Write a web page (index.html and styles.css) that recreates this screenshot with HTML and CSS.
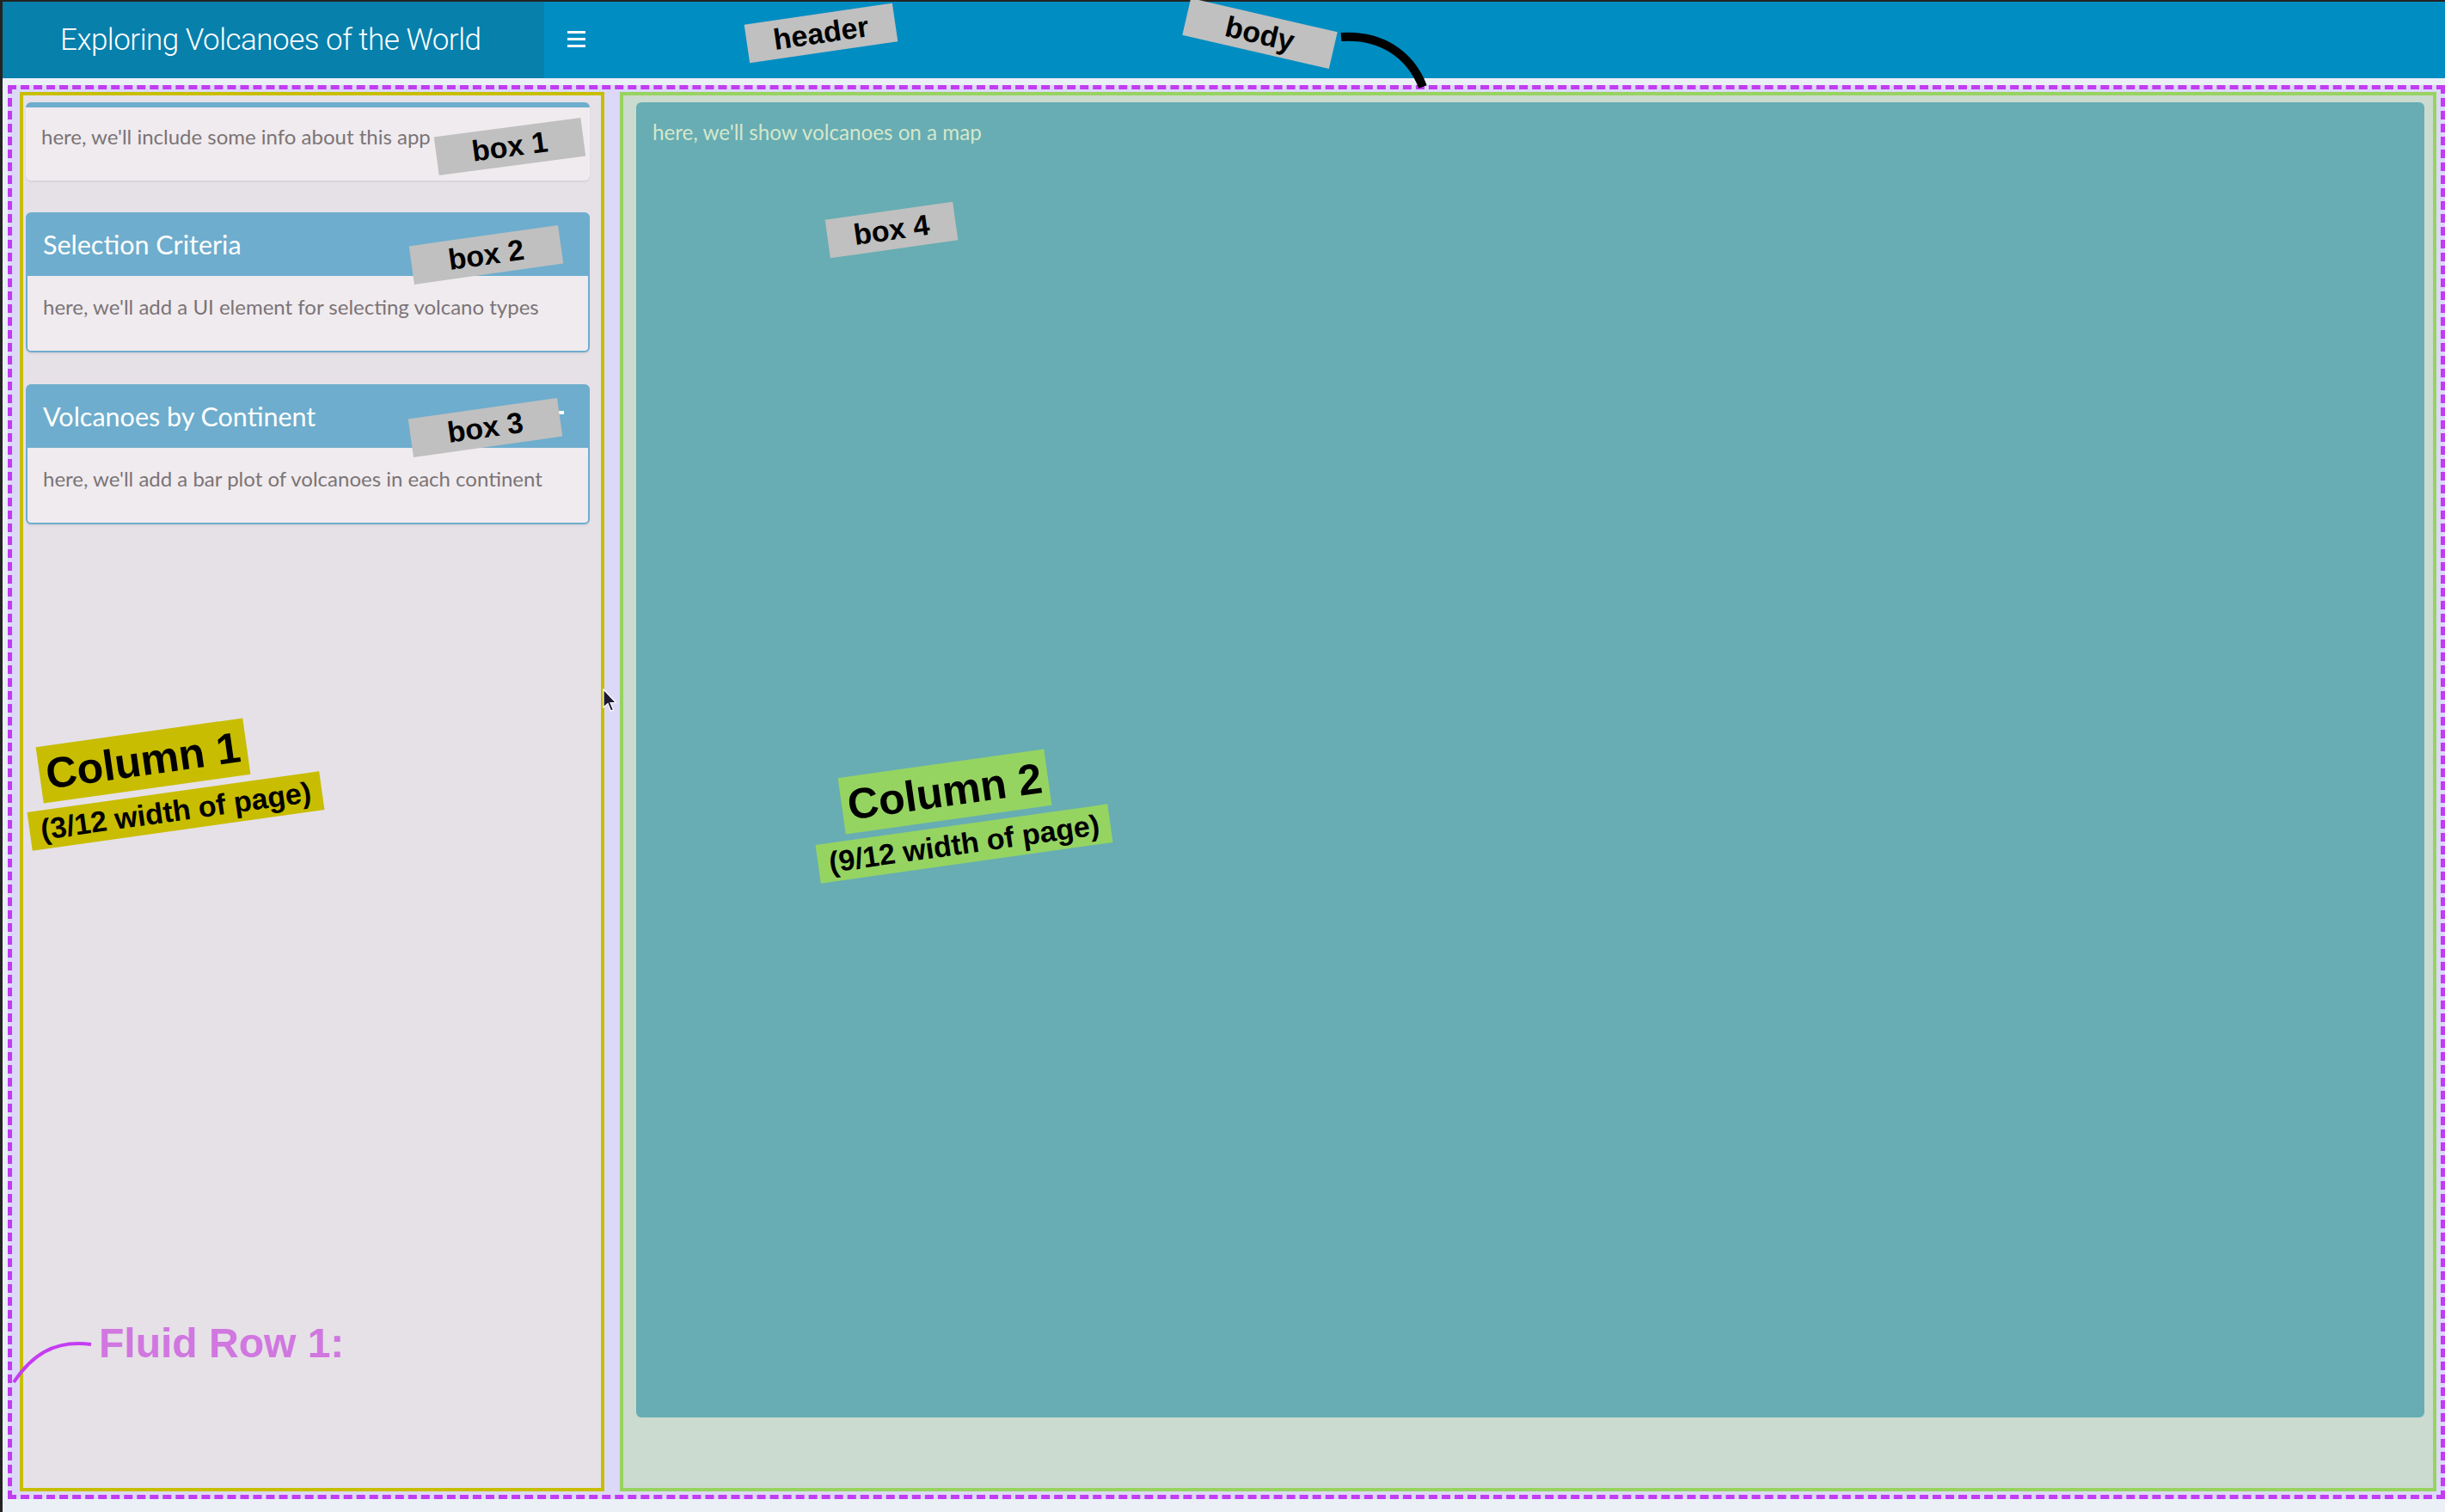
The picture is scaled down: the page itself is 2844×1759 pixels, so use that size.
FILE: index.html
```html
<!DOCTYPE html>
<html lang="en">
<head>
<meta charset="utf-8">
<title>Exploring Volcanoes of the World</title>
<link rel="stylesheet" href="styles.css">
</head>
<body>
<div class="frame">
  <header class="topbar">
    <div class="logo"><span class="logo-text">Exploring Volcanoes of the World</span></div>
    <nav class="navbar">
      <span class="toggle"><i></i><i></i><i></i></span>
    </nav>
  </header>
  <main class="content">
    <div class="fluid-row">
      <section class="col col-3">
        <div class="box box-plain">
          <div class="box-body"><p>here, we'll include some info about this app</p></div>
        </div>
        <div class="box box-solid">
          <div class="box-header"><h3 class="box-title">Selection Criteria</h3></div>
          <div class="box-body"><p>here, we'll add a UI element for selecting volcano types</p></div>
        </div>
        <div class="box box-solid">
          <div class="box-header"><h3 class="box-title">Volcanoes by Continent</h3><span class="box-tool"></span></div>
          <div class="box-body"><p>here, we'll add a bar plot of volcanoes in each continent</p></div>
        </div>
      </section>
      <section class="col col-9">
        <div class="box-map"><p>here, we'll show volcanoes on a map</p></div>
      </section>
    </div>
  </main>
</div>

<div class="annotations">
  <div class="tag tag-header">header</div>
  <div class="tag tag-body">body</div>
  <div class="tag tag-box1">box 1</div>
  <div class="tag tag-box2">box 2</div>
  <div class="tag tag-box3">box 3</div>
  <div class="tag tag-box4">box 4</div>
  <div class="tag tag-col1 tag-big">Column 1</div>
  <div class="tag tag-col1s">(3/12 width of page)</div>
  <div class="tag tag-col2 tag-big">Column 2</div>
  <div class="tag tag-col2s">(9/12 width of page)</div>
  <div class="fluid-label">Fluid Row 1:</div>
  <svg class="arrows" width="2844" height="1759" viewBox="0 0 2844 1759">
    <path d="M1560 43 C1605 40 1640 62 1655 101" fill="none" stroke="#000" stroke-width="10"/>
    <path d="M16 1608 C36 1578 62 1558 106 1564" fill="none" stroke="#c43cf2" stroke-width="4"/>
  </svg>
  <svg class="cursor" width="18" height="28" viewBox="0 0 18 28">
    <path d="M1 1 L1 22 L6 17.5 L9.5 26 L12.5 24.8 L9 16.5 L15.5 16.5 Z" fill="#1c1a33" stroke="#fff" stroke-width="1.2"/>
  </svg>
</div>
</body>
</html>
```
FILE: styles.css
```css
* { box-sizing: border-box; }
html, body { margin: 0; padding: 0; }
body {
  background: #ebf0f7;
  font-family: Lato, "Open Sans", sans-serif;
  position: relative;
  overflow: hidden;
}
.frame {
  height: 100vh;
  display: flex;
  flex-direction: column;
  border-top: 2px solid #232323;
  border-left: 3px solid #232323;
}
.topbar {
  height: 89px;
  flex: none;
  display: flex;
}
.logo {
  width: 630px;
  background: #0780ac;
  padding-left: 67px;
  line-height: 89px;
}
.logo-text {
  font-family: Roboto, "Liberation Sans", sans-serif;
  font-weight: 300;
  font-size: 35px;
  letter-spacing: -0.5px;
  color: #fff;
  white-space: nowrap;
}
.navbar {
  flex: 1;
  background: #008dc2;
  padding: 34px 0 0 27px;
}
.toggle { display: flex; flex-direction: column; gap: 5px; width: 21px; }
.toggle i { display: block; height: 3px; background: #fff; }

.content {
  flex: 1;
  display: flex;
  padding: 8px 0 15px 6px;
}
.fluid-row {
  flex: 1;
  display: flex;
  gap: 18px;
  border: 5px dashed #c23cf2;
  background: #dcd8f8;
  padding: 3px 5px 4px 9px;
}
.col-3 {
  width: 680px;
  flex: none;
  border: 4px solid #c8be00;
  background: #e6e1e7;
  padding: 8px 13px 0 3px;
}
.col-9 {
  flex: 1;
  border: 4px solid #97d35f;
  background: #cbdbcf;
  padding: 8px 10px 0 15px;
}
.box {
  background: #f0ebee;
  border-radius: 6px;
  margin-bottom: 37px;
  color: #7a7477;
  font-size: 24px;
  box-shadow: 0 2px 2px rgba(0,0,0,0.06);
}
.box p { margin: 0; line-height: 37px; white-space: nowrap; }
.box-plain { border-top: 6px solid #6eadcd; }
.box-plain .box-body { height: 85px; padding: 15px 18px 0; }
.box-solid { border: 2px solid #6eadcd; }
.box-header {
  background: #6eadcd;
  height: 72px;
  padding: 17px 28px 0 18px;
  display: flex;
  justify-content: space-between;
  align-items: flex-start;
}
.box-title {
  margin: 0;
  font-size: 30.5px;
  line-height: 36px;
  font-weight: 400;
  color: #fff;
}
.box-tool {
  width: 20px;
  height: 4px;
  margin-top: 12px;
  background: #fff;
}
.box-solid .box-body { height: 87px; padding: 17px 18px 0; }

.box-map {
  height: 1530px;
  background: #67adb3;
  border-radius: 6px;
  padding: 16px 19px;
}
.box-map p {
  margin: 0;
  font-size: 24.2px;
  line-height: 37px;
  color: #d5e7cc;
}

/* annotation overlay */
.annotations { position: absolute; left: 0; top: 0; width: 0; height: 0; }
.tag {
  position: absolute;
  display: flex;
  align-items: center;
  justify-content: center;
  background: #c0c0c0;
  color: #000;
  font-family: "Liberation Sans", Arial, sans-serif;
  font-weight: 700;
  font-size: 34px;
  height: 45px;
  white-space: nowrap;
}
.tag-header { left: 868px; top: 16px; width: 174px; transform: rotate(-8.3deg); }
.tag-body { left: 1378px; top: 17px; width: 175px; height: 44px; transform: rotate(13deg); }
.tag-box1 { left: 507px; top: 148px; width: 172px; transform: rotate(-7.5deg); }
.tag-box2 { left: 478px; top: 274px; width: 175px; transform: rotate(-8deg); }
.tag-box3 { left: 477px; top: 475px; width: 175px; transform: rotate(-8deg); }
.tag-box4 { left: 962px; top: 245px; width: 150px; transform: rotate(-8deg); }
.tag-big { font-size: 50px; height: 66px; }
.tag-col1 { left: 45px; top: 852px; width: 243px; background: #c8bd00; transform: rotate(-8deg); }
.tag-col1s { left: 33px; top: 921px; width: 343px; background: #c8bd00; transform: rotate(-8deg); }
.tag-col2 { left: 978px; top: 888px; width: 242px; background: #96d462; transform: rotate(-8deg); }
.tag-col2s { left: 950px; top: 959px; width: 343px; background: #96d462; transform: rotate(-8deg); }
.fluid-label {
  position: absolute;
  left: 115px;
  top: 1539px;
  font-family: "Liberation Sans", Arial, sans-serif;
  font-weight: 700;
  font-size: 48px;
  line-height: 48px;
  color: #d077e0;
  white-space: nowrap;
}
.arrows { position: absolute; left: 0; top: 0; }
.cursor { position: absolute; left: 701px; top: 801px; }
```
